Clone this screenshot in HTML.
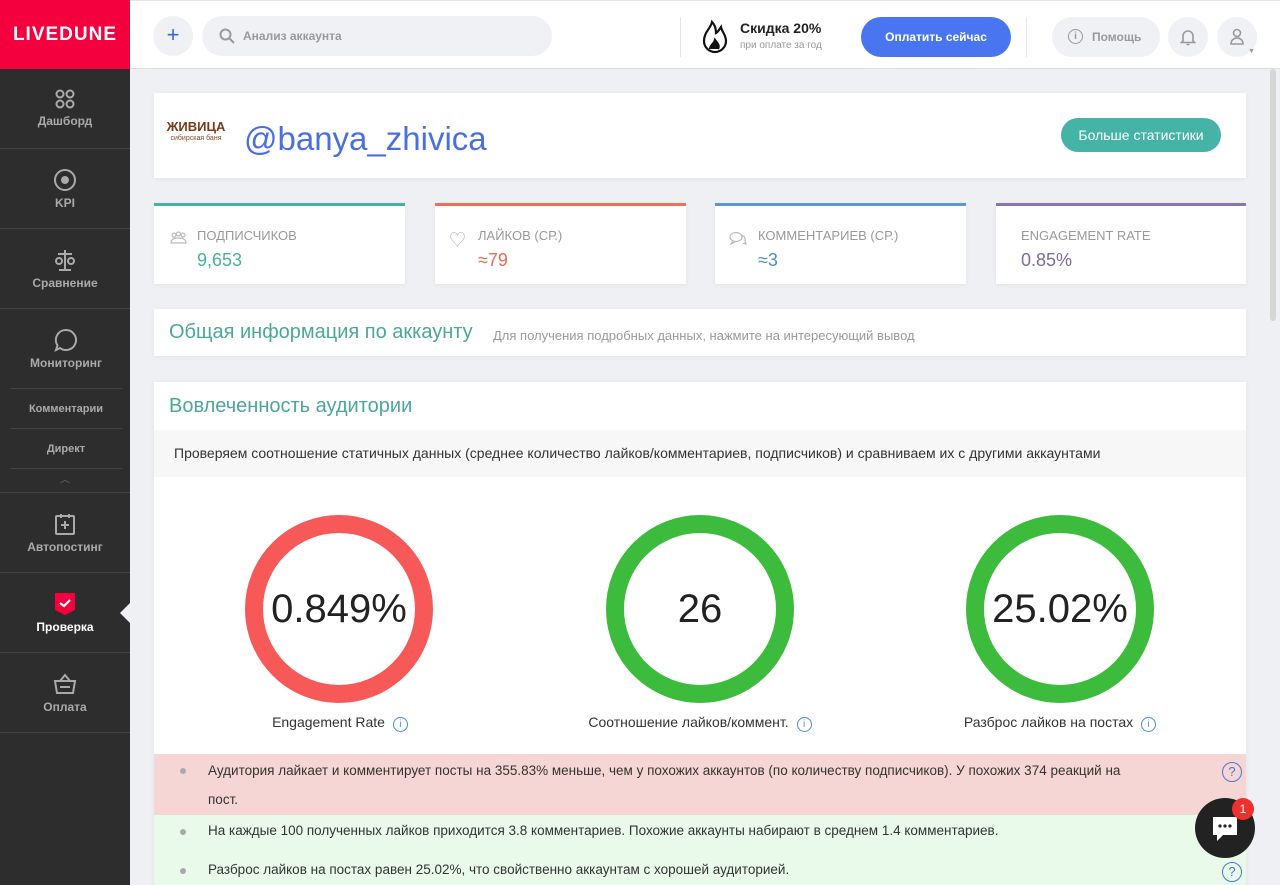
<!DOCTYPE html>
<html><head><meta charset="utf-8"><style>
*{box-sizing:border-box;margin:0;padding:0}
html,body{width:1280px;height:885px;overflow:hidden}
body{background:#eef0f3;font-family:"Liberation Sans","Noto Sans CJK SC",sans-serif;position:relative}
.side{position:absolute;left:0;top:0;width:130px;height:885px;background:#2d2d2d}
.logo{height:69px;background:#f5003f;color:#fff;font-weight:bold;font-size:19px;letter-spacing:1px;text-align:center;line-height:70px}
.si{position:absolute;left:0;width:130px;text-align:center;color:#aaa;font-size:12px;font-weight:bold;border-bottom:1px solid #444}
.si svg{display:block;margin:0 auto 4px}
.sub{left:10px;width:112px;font-size:11px}
.top{position:absolute;left:130px;top:0;right:0;height:69px;background:#fff;border-bottom:1px solid #ddd;border-top:1px solid #e4e4e4}
.card{position:absolute;background:#fff;box-shadow:0 1px 4px rgba(0,0,0,.06)}
.stat{top:203px;height:81px;width:251px;border-top:3px solid}
.stat .l{position:absolute;left:43px;top:22px;font-size:13px;color:#999}
.stat .v{position:absolute;left:43px;top:44px;font-size:18px}
.row{position:absolute;left:154px;width:1092px;font-size:13.5px;color:#333}
.dot{position:absolute;left:26px;width:6px;height:6px;border-radius:3px;background:#aaa}
.q{position:absolute;left:1068px;width:20px;height:20px;border:1.5px solid #4a78c8;border-radius:50%;color:#4a78c8;font-size:13px;text-align:center;line-height:18px}
.g{position:absolute;top:515px;width:188px;height:188px;border-radius:50%;border:18px solid;text-align:center;line-height:152px;font-size:40px;color:#222}
.gl{position:absolute;top:714px;font-size:14px;color:#333;width:300px;text-align:center}
.gl b{display:inline-block;width:15px;height:15px;border:1.3px solid #4a8ad8;border-radius:50%;color:#4a8ad8;font-size:10px;line-height:13px;margin-left:8px;font-weight:normal}
</style></head><body>
<div class="side">
<div class="logo">LIVEDUNE</div>
<div class="si" style="top:69px;height:80px;padding-top:19px"><svg width="22" height="22" viewBox="0 0 22 22" fill="none" stroke="#aaa" stroke-width="2"><circle cx="6" cy="6" r="3.5"/><circle cx="16" cy="6" r="3.5"/><circle cx="6" cy="16" r="3.5"/><circle cx="16" cy="16" r="3.5"/></svg>Дашборд</div>
<div class="si" style="top:149px;height:80px;padding-top:19px"><svg width="24" height="24" viewBox="0 0 24 24" fill="none" stroke="#aaa" stroke-width="2"><circle cx="12" cy="12" r="10"/><circle cx="12" cy="12" r="3" fill="#aaa"/></svg>KPI</div>
<div class="si" style="top:229px;height:80px;padding-top:19px"><svg width="24" height="24" viewBox="0 0 24 24" fill="none" stroke="#aaa" stroke-width="2"><path d="M12 2v20M6 22h12M5 6h14"/><circle cx="6" cy="13" r="3"/><circle cx="18" cy="13" r="3"/></svg>Сравнение</div>
<div class="si" style="top:309px;height:80px;padding-top:19px;left:10px;width:112px;border-bottom-color:#444"><svg width="24" height="24" viewBox="0 0 24 24" fill="none" stroke="#aaa" stroke-width="2"><path d="M12 2a10 10 0 1 1-6 18l-4 2 1.5-4.5A10 10 0 0 1 12 2z"/></svg>Мониторинг</div>
<div class="si sub" style="top:389px;height:40px;line-height:40px">Комментарии</div>
<div class="si sub" style="top:429px;height:40px;line-height:40px">Директ</div>
<div class="si" style="top:469px;height:24px;color:#555;font-size:10px;line-height:24px">︿</div>
<div class="si" style="top:493px;height:80px;padding-top:19px"><svg width="24" height="24" viewBox="0 0 24 24" fill="none" stroke="#aaa" stroke-width="2"><rect x="3" y="4" width="18" height="18" rx="1"/><path d="M8 2v4M16 2v4M12 9v8M8 13h8"/></svg>Автопостинг</div>
<div class="si" style="top:573px;height:80px;padding-top:19px;color:#fff"><svg width="22" height="24" viewBox="0 0 22 24"><path d="M1 1h20v17l-10 5-10-5z" fill="#f5003f"/><path d="M6 11l4 3 6-6" stroke="#fff" stroke-width="2.2" fill="none"/></svg>Проверка</div>
<div style="position:absolute;left:120px;top:603px;width:0;height:0;border-top:10px solid transparent;border-bottom:10px solid transparent;border-right:10px solid #eef0f3"></div>
<div class="si" style="top:653px;height:80px;padding-top:19px"><svg width="24" height="24" viewBox="0 0 24 24" fill="none" stroke="#aaa" stroke-width="2"><path d="M7 9l5-6 5 6M2 9h20l-2 12H4zM7 15h10"/></svg>Оплата</div>
</div>
<div class="top">
<div style="position:absolute;left:23px;top:15px;width:40px;height:40px;border-radius:50%;background:#f0f1f4;color:#3a66e0;font-size:22px;text-align:center;line-height:38px">+</div>
<div style="position:absolute;left:72px;top:15px;width:350px;height:40px;border-radius:20px;background:#f0f1f4;color:#999;font-size:12px;font-weight:bold;line-height:40px;padding-left:41px"><svg style="position:absolute;left:17px;top:12px" width="16" height="16" viewBox="0 0 16 16" fill="none" stroke="#999" stroke-width="2"><circle cx="6.5" cy="6.5" r="5"/><path d="M10 10l5 5"/></svg>Анализ аккаунта</div>
<div style="position:absolute;left:550px;top:16px;width:1px;height:40px;background:#e5e5e5"></div>
<svg style="position:absolute;left:572px;top:19px" width="26" height="34" viewBox="0 0 26 34" fill="none" stroke="#111" stroke-width="2.2"><path d="M10 2c-1 6-8 10-8 19a11 11 0 0 0 22 0c0-6-4-9-5-14-2 3-3 5-5 6 0-4-1-8-4-11z"/><path d="M8 29c0-4 4-5 5-9 2 3 5 5 3 9" fill="#111"/></svg>
<div style="position:absolute;left:610px;top:19px;font-size:14px;font-weight:bold;color:#222">Скидка 20%</div>
<div style="position:absolute;left:610px;top:39px;font-size:10px;color:#999">при оплате за год</div>
<div style="position:absolute;left:731px;top:16px;width:150px;height:40px;border-radius:20px;background:#4a75f0;color:#fff;font-size:12px;font-weight:bold;text-align:center;line-height:40px">Оплатить сейчас</div>
<div style="position:absolute;left:896px;top:16px;width:1px;height:40px;background:#e5e5e5"></div>
<div style="position:absolute;left:922px;top:16px;width:108px;height:40px;border-radius:20px;background:#f0f1f4;color:#999;font-size:12px;font-weight:bold;line-height:40px;padding-left:40px"><span style="position:absolute;left:16px;top:12px;width:15px;height:15px;border:1.5px solid #999;border-radius:50%;font-size:10px;line-height:13px;text-align:center">i</span>Помощь</div>
<div style="position:absolute;left:1038px;top:16px;width:40px;height:40px;border-radius:50%;background:#f0f1f4"><svg style="position:absolute;left:12px;top:11px" width="16" height="18" viewBox="0 0 16 18" fill="none" stroke="#999" stroke-width="1.6"><path d="M3 13V8a5 5 0 0 1 10 0v5l1.5 1.5h-13zM6.5 16.5h3"/></svg></div>
<div style="position:absolute;left:1087px;top:16px;width:40px;height:40px;border-radius:50%;background:#f0f1f4"><svg style="position:absolute;left:12px;top:11px" width="16" height="18" viewBox="0 0 16 18" fill="none" stroke="#999" stroke-width="1.6"><circle cx="8" cy="5" r="3.5"/><path d="M2 16c0-4 3-6 6-6s6 2 6 6z"/></svg><span style="position:absolute;right:2px;bottom:2px;font-size:7px;color:#999">▼</span></div>
</div>
<div style="position:absolute;left:1270px;top:69px;width:6px;height:252px;background:#d6d6d6;border-radius:3px"></div>
<div class="card" style="left:154px;top:93px;width:1092px;height:85px">
<div style="position:absolute;left:11px;top:26px;width:62px;height:36px;color:#8a4a2a;font-size:7px;line-height:8px;text-align:center"><div style="font-size:13px;line-height:16px;font-weight:bold;color:#7a3a1a">ЖИВИЦА</div>сибирская баня</div>
<div style="position:absolute;left:90px;top:27px;font-size:33px;color:#4a6fe0">@banya_zhivica</div>
<div style="position:absolute;left:907px;top:25px;width:160px;height:34px;border-radius:17px;background:#45b3a6;color:#fff;font-size:14px;text-align:center;line-height:34px">Больше статистики</div>
</div>
<div class="card stat" style="left:154px;border-color:#47b0a2"><svg style="position:absolute;left:16px;top:25px" width="17" height="14" viewBox="0 0 17 14" fill="none" stroke="#bbb" stroke-width="1.2"><circle cx="4" cy="4" r="2"/><circle cx="8.5" cy="3" r="2"/><circle cx="13" cy="4" r="2"/><path d="M1 12c0-3 2-5 7.5-5S16 9 16 12z"/></svg><div class="l">ПОДПИСЧИКОВ</div><div class="v" style="color:#47b0a2">9,653</div></div>
<div class="card stat" style="left:435px;border-color:#e97258"><span style="position:absolute;left:14px;top:20px;color:#bbb;font-size:17px">♡</span><div class="l">ЛАЙКОВ (СР.)</div><div class="v" style="color:#e96a50">≈79</div></div>
<div class="card stat" style="left:715px;border-color:#5a96d2"><svg style="position:absolute;left:14px;top:25px" width="18" height="15" viewBox="0 0 18 15" fill="none" stroke="#bbb" stroke-width="1.2"><ellipse cx="7" cy="6" rx="6" ry="4.5"/><path d="M4 10l-2 3 4-2M12 4c3 1 5 3 4 6l1 3-3-1"/></svg><div class="l">КОММЕНТАРИЕВ (СР.)</div><div class="v" style="color:#4d8ed0">≈3</div></div>
<div class="card stat" style="left:996px;width:250px;border-color:#8a77a8"><div class="l" style="left:25px">ENGAGEMENT RATE</div><div class="v" style="left:25px;color:#7f6aa0">0.85%</div></div>
<div class="card" style="left:154px;top:309px;width:1092px;height:47px"><span style="position:absolute;left:15px;top:12px;font-size:20px;color:#4aa89a">Общая информация по аккаунту</span><span style="position:absolute;left:339px;top:19px;font-size:13px;color:#999">Для получения подробных данных, нажмите на интересующий вывод</span></div>
<div class="card" style="left:154px;top:382px;width:1092px;height:510px">
<div style="position:absolute;left:15px;top:13px;font-size:20px;color:#4aa89a">Вовлеченность аудитории</div>
<div style="position:absolute;left:0;top:48px;width:1092px;height:47px;background:#f7f7f7;font-size:14px;color:#333;line-height:47px;padding-left:20px">Проверяем соотношение статичных данных (среднее количество лайков/комментариев, подписчиков) и сравниваем их с другими аккаунтами</div>
</div>
<div class="g" style="left:245px;border-color:#f75858">0.849%</div>
<div class="g" style="left:606px;border-color:#3dbb3d">26</div>
<div class="g" style="left:966px;border-color:#3dbb3d">25.02%</div>
<div class="gl" style="left:190px">Engagement Rate<b>i</b></div>
<div class="gl" style="left:550px">Соотношение лайков/коммент.<b>i</b></div>
<div class="gl" style="left:910px">Разброс лайков на постах<b>i</b></div>
<div class="row" style="top:754px;height:61px;background:#f6d5d5"><span class="dot" style="top:14px"></span><div style="position:absolute;left:54px;top:2px;width:1000px;line-height:29px">Аудитория лайкает и комментирует посты на 355.83% меньше, чем у похожих аккаунтов (по количеству подписчиков). У похожих 374 реакций на<br>пост.</div><span class="q" style="top:8px">?</span></div>
<div class="row" style="top:815px;height:70px;background:#e9f9ea"><span class="dot" style="top:14px"></span><div style="position:absolute;left:54px;top:8px">На каждые 100 полученных лайков приходится 3.8 комментариев. Похожие аккаунты набирают в среднем 1.4 комментариев.</div><span class="dot" style="top:53px"></span><div style="position:absolute;left:54px;top:47px">Разброс лайков на постах равен 25.02%, что свойственно аккаунтам с хорошей аудиторией.</div><span class="q" style="top:47px">?</span></div>
<div style="position:absolute;left:1195px;top:798px;width:60px;height:60px;border-radius:50%;background:#222"><svg style="position:absolute;left:16px;top:17px" width="28" height="28" viewBox="0 0 28 28"><path d="M2 2h24v18H12l-6 6v-6H2z" fill="#fff"/><circle cx="9" cy="11" r="1.6" fill="#222"/><circle cx="14" cy="11" r="1.6" fill="#222"/><circle cx="19" cy="11" r="1.6" fill="#222"/></svg></div>
<div style="position:absolute;left:1232px;top:798px;width:22px;height:22px;border-radius:50%;background:#f03030;color:#fff;font-size:12px;text-align:center;line-height:22px">1</div>
</body></html>
